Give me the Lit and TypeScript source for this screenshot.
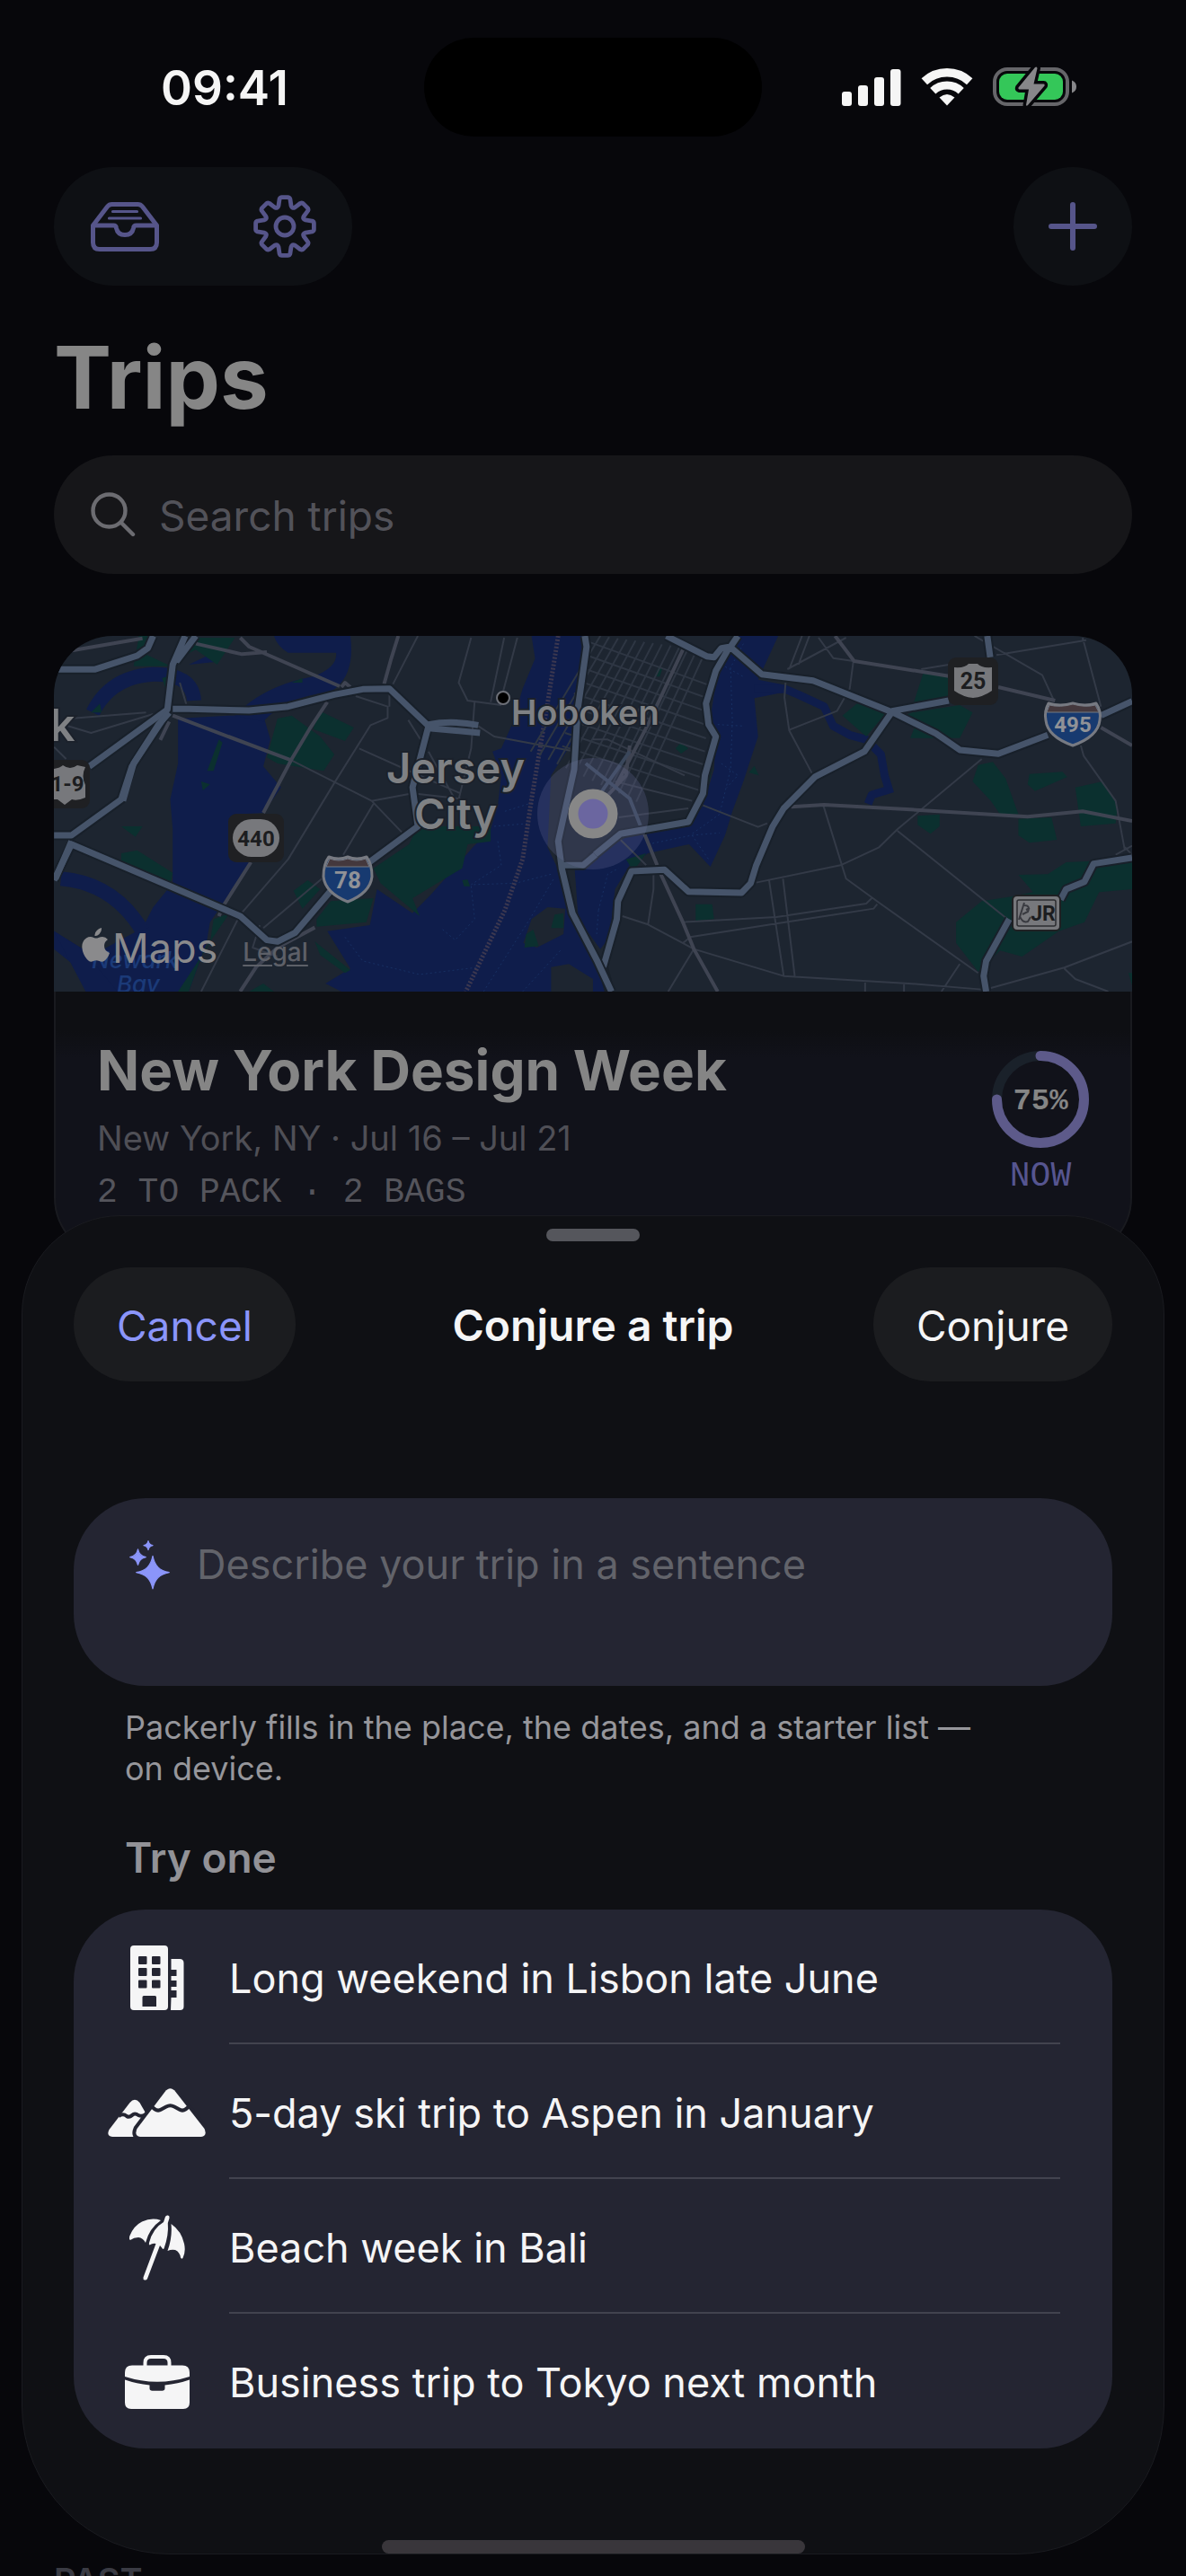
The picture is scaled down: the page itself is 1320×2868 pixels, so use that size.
import { LitElement, html, svg, css } from "lit";
import { customElement, state } from "lit/decorators.js";

/* ---------- icon helpers ---------- */

const star = (cx: number, cy: number, r: number) => {
  const k = r * 0.2;
  return `M${cx} ${cy - r}C${cx + k * 0.6} ${cy - k * 2} ${cx + k * 2} ${cy - k * 0.6} ${cx + r} ${cy}C${cx + k * 2} ${cy + k * 0.6} ${cx + k * 0.6} ${cy + k * 2} ${cx} ${cy + r}C${cx - k * 0.6} ${cy + k * 2} ${cx - k * 2} ${cy + k * 0.6} ${cx - r} ${cy}C${cx - k * 2} ${cy - k * 0.6} ${cx - k * 0.6} ${cy - k * 2} ${cx} ${cy - r}Z`;
};

const gearPath = (() => {
  const at = (r: number, deg: number) => {
    const a = ((deg - 90) * Math.PI) / 180;
    return `${(35 + r * Math.cos(a)).toFixed(2)} ${(35 + r * Math.sin(a)).toFixed(2)}`;
  };
  let d = "";
  for (let i = 0; i < 8; i++) {
    const c = i * 45;
    d += `${i ? "L" : "M"}${at(24, c - 17)}L${at(31, c - 11)}Q${at(33, c - 9)} ${at(32.5, c - 5)}L${at(32.5, c + 5)}Q${at(33, c + 9)} ${at(31, c + 11)}L${at(24, c + 17)}Q${at(21, c + 22.5)} ${at(24, c + 28)}`;
  }
  return d + "Z";
})();

const icons = {
  tray: html`<svg class="icon-tray" viewBox="0 0 76 55" fill="none" stroke="currentColor" stroke-width="5" stroke-linejoin="round" stroke-linecap="round" aria-hidden="true">
    <path d="M2.5 26L18.5 5Q20.5 2.5 23.5 2.5H52.5Q55.5 2.5 57.5 5L73.5 26V45Q73.5 52.5 66 52.5H10Q2.5 52.5 2.5 45Z" />
    <path d="M3 26H25.500Q28 26 28.500 29Q30 36.500 38 36.500Q46 36.500 47.500 29Q48 26 50.500 26H73" />
    <path d="M24.500 10.500H51.500M20.500 18H55.500" stroke-width="3.200" />
  </svg>`,
  gear: html`<svg class="icon-gear" viewBox="0 0 70 70" fill="none" stroke="currentColor" stroke-width="4.800" stroke-linejoin="round" aria-hidden="true">
    <path d=${gearPath} /><circle cx="35" cy="35" r="10" />
  </svg>`,
  plus: html`<svg class="icon-plus" viewBox="0 0 54 54" stroke="currentColor" stroke-width="6" stroke-linecap="round" aria-hidden="true">
    <path d="M27 3V51M3 27H51" />
  </svg>`,
  search: html`<svg class="icon-search" viewBox="0 0 50 50" fill="none" stroke="currentColor" stroke-width="4.400" stroke-linecap="round" aria-hidden="true">
    <circle cx="20.500" cy="20.500" r="18" /><path d="M34 34L47 47" />
  </svg>`,
  sparkles: html`<svg class="icon-spark" viewBox="0 0 45 55" fill="currentColor" stroke="currentColor" stroke-width="1.200" stroke-linejoin="round" aria-hidden="true">
    <path d=${star(26, 35.700, 18.300)} /><path d=${star(9.500, 18.700, 8.800)} /><path d=${star(21, 5.600, 5)} />
  </svg>`,
  building: html`<svg class="icon-building" viewBox="0 0 60 72" fill="currentColor" aria-hidden="true">
    <path fill-rule="evenodd" d="M4 0H38Q42 0 42 4V68Q42 72 38 72H4Q0 72 0 68V4Q0 0 4 0ZM10 12Q9 12 9 13V20Q9 21 10 21H17.500Q18.500 21 18.500 20V13Q18.500 12 17.500 12ZM25 12Q24 12 24 13V20Q24 21 25 21H32.500Q33.500 21 33.500 20V13Q33.500 12 32.500 12ZM10 25Q9 25 9 26V33Q9 34 10 34H17.500Q18.500 34 18.500 33V26Q18.500 25 17.500 25ZM25 25Q24 25 24 26V33Q24 34 25 34H32.500Q33.500 34 33.500 33V26Q33.500 25 32.500 25ZM10 38.500Q9 38.500 9 39.500V46.500Q9 47.500 10 47.500H17.500Q18.500 47.500 18.500 46.500V39.500Q18.500 38.500 17.500 38.500ZM25 38.500Q24 38.500 24 39.500V46.500Q24 47.500 25 47.500H32.500Q33.500 47.500 33.500 46.500V39.500Q33.500 38.500 32.500 38.500ZM15 56Q13.500 56 13.500 57.500V68H29V57.500Q29 56 27.500 56Z" />
    <path d="M45.500 15H55Q59.500 15 59.500 19.500V68Q59.500 72 55.500 72H45L45.500 58H51.500V50H45.500V46H51.500V39H45.500V34H51.500V27H45.500Z" />
  </svg>`,
  mountains: html`<svg class="icon-mountains" viewBox="0 0 110 54" aria-hidden="true">
    <path fill="currentColor" d="M24.500 16Q30 9.500 35.500 16L48 38L34 54H5Q-2 53 1.500 46Z" />
    <path class="cut" d="M12 31Q17 27.500 21 31Q24 33 27 30Q30 27 34 30Q38 32 42 29" />
    <path class="halo" d="M63.500 4Q69.500 -3.500 75.500 4L107.500 45Q111 53 104 54H36Q29 53 32.500 45Z" />
    <path fill="currentColor" d="M63.500 4Q69.500 -3.500 75.500 4L107.500 45Q111 53 104 54H36Q29 53 32.500 45Z" />
    <path class="cut" d="M48 19Q54 27 59.500 23.500L65 20.500Q69.500 18 74 20.500L79.500 23.500Q85 27 91 19" />
  </svg>`,
  umbrella: html`<svg class="icon-umbrella" viewBox="0 0 62 73" fill="currentColor" aria-hidden="true">
    <path d="M1 28Q-1 27 0.500 23Q5 12 14 7.500Q25 2.500 35 6Q22 15 18 31Q15 25.500 10 25Q5 25 1 28Z" />
    <path d="M40 2Q41 0 43 0.500Q45 1 44.500 3.500L42.800 9Q44 22 38.500 37.500Q37 38.500 36.500 37L34 34L20 71Q19 73 17 72.500Q15 72 15.500 69.500L29.500 32Q26 31 22.500 33.500Q21.500 33 22 31Q26 15 38 8Z" />
    <path d="M46.500 10Q58 18 61 32Q63 41 59.500 48Q58 49.500 57 47.500Q56 41 51 39Q47 38 42.500 40Q48 25 46.500 10Z" />
  </svg>`,
  briefcase: html`<svg class="icon-briefcase" viewBox="0 0 72 60" fill="currentColor" aria-hidden="true">
    <path d="M20.500 12V8.500Q20.500 0 29 0H43Q51.500 0 51.500 8.500V12H47.500V8.500Q47.500 4 43 4H29Q24.500 4 24.500 8.500V12Z" />
    <path d="M8 11.500H64Q72 11.500 72 19.500V24Q36 35.500 0 24V19.500Q0 11.500 8 11.500Z" />
    <path d="M0 27.500Q13 32 27.500 33.500V37Q27.500 39.700 30.500 39.700H41.500Q44.500 39.700 44.500 37V33.500Q59 32 72 27.500V53Q72 60 65 60H7Q0 60 0 53Z" />
  </svg>`,
};

/* ---------- status bar ---------- */

@customElement("status-bar")
class StatusBar extends LitElement {
  static styles = css`
    :host {
      display: grid;
      grid-template-columns: 1fr 376px 1fr;
      align-items: center;
      padding-top: 42px;
      color: #f5f5f5;
    }
    .time {
      font-size: 53px;
      font-weight: 600;
      line-height: 64px;
      text-align: center;
      padding: 2px 0 0 28px;
    }
    .island {
      height: 110px;
      border-radius: 55px;
      background: #000;
    }
    .signals {
      display: flex;
      justify-content: center;
      align-items: center;
      gap: 22px;
      padding-right: 32px;
    }
    .bars { width: 66px; height: 42px; }
    .wifi { width: 58px; height: 42px; }
    .battery { width: 94px; height: 46px; }
  `;
  render() {
    return html`
      <time class="time">09:41</time>
      <div class="island"></div>
      <div class="signals">
        <svg class="bars" viewBox="0 0 66 42" fill="currentColor" aria-hidden="true">
          <rect x="0" y="26" width="11" height="16" rx="3" /><rect x="18" y="19" width="11" height="23" rx="3" />
          <rect x="36" y="10" width="11" height="32" rx="3" /><rect x="54" y="1" width="11.500" height="41" rx="3" />
        </svg>
        <svg class="wifi" viewBox="0 0 58 42" fill="none" stroke="currentColor" aria-hidden="true">
          <path d="M3.800 14.700A37 37 0 0 1 54.200 14.700" stroke-width="9.500" />
          <path d="M13.300 25.200A23 23 0 0 1 44.700 25.200" stroke-width="9" />
          <path d="M20.500 32.500Q29 25.500 37.500 32.500L29 41.500Z" fill="currentColor" stroke="none" />
        </svg>
        <svg class="battery" viewBox="0 -1 94 46" aria-hidden="true">
          <rect x="2" y="2" width="81" height="39" rx="14" fill="none" stroke="#66666a" stroke-width="4" />
          <rect x="7" y="7" width="71" height="29" rx="9" fill="#34c759" />
          <path d="M88 14.500Q93 16.500 93 21.500Q93 26.500 88 28.500Z" fill="#87878a" />
          <path d="M47 0L28.500 22.500Q28 24 29.500 24.500H40L37 42Q37.500 43.500 39 42L57.500 20.500Q58 18.500 56.500 18.500H45.500L49.500 1Q49 -1.500 47 0Z" fill="#87878a" stroke="#07070b" stroke-width="7" paint-order="stroke" stroke-linejoin="round" />
        </svg>
      </div>
    `;
  }
}

/* ---------- map ---------- */

/* West half and east half are each digitised on their own grid. */
const west = "translate(-20 -18) scale(0.3954 0.3333)";
const east = "translate(600 -18) scale(0.4082 0.3333)";

const manhattanGrid = (() => {
  let d = "";
  for (let i = 0; i < 13; i++) {
    const x = 20 + i * 24;
    d += `M${x} ${54 + i * 4}L${x - 190} ${440 + i * 14}`;
  }
  for (let i = 0; i < 9; i++) {
    const y = 70 + i * 44;
    d += `M${-20 - i * 8} ${y}L${320 - i * 3} ${y + 150}`;
  }
  return d;
})();

@customElement("trip-map")
class TripMap extends LitElement {
  static styles = css`
    :host { display: block; position: relative; }
    .map { display: block; width: 100%; height: auto; }
    .map path { vector-effect: non-scaling-stroke; fill: none; stroke-linejoin: round; }
    .map .water { fill: #0f1d4b; }
    .map .park { fill: #0b302f; }
    .map .land { fill: #1d2530; }
    .map .creek { stroke: #0f1d4b; stroke-width: 9; }
    .map .river { stroke: #0f1d4b; stroke-width: 16; }
    .map .street { stroke: #2e3643; stroke-width: 2; }
    .map .minor { stroke: #333a47; stroke-width: 2; }
    .map .major { stroke: #3f4452; stroke-width: 4; }
    .map .casing { stroke: #18202a; stroke-width: 11; }
    .map .highway { stroke: #46546a; stroke-width: 7; }
    .map .ferry { stroke: #173063; stroke-width: 1; stroke-dasharray: 2 3; }
    .map .border { stroke: #3c3850; stroke-width: 5; stroke-dasharray: 2 2; }
    .city {
      fill: #7f8184;
      stroke: #1b212b;
      stroke-width: 4;
      paint-order: stroke;
      font-weight: 600;
    }
    .sea { fill: #1b3a78; font-style: italic; font-weight: 500; }
    .num { font-family: "Roboto", "Liberation Sans", sans-serif; font-weight: 700; text-anchor: middle; }
    .dark { fill: #1c1d20; }
    .light { fill: #909297; }
    .credits {
      position: absolute;
      left: 31px;
      bottom: 20px;
      display: flex;
      align-items: center;
      color: #8a8a8c;
    }
    .apple { width: 32px; height: 40px; margin-bottom: 8px; }
    .brand { font-size: 45px; line-height: 56px; margin-left: 2px; }
    .legal {
      font-size: 28px;
      line-height: 30px;
      margin-left: 28px;
      margin-top: 8px;
      color: #5d6068;
      font-weight: 500;
      text-underline-offset: 4px;
    }
  `;
  render() {
    const westRoads = svg`
      <path class="casing" d="M51 166H165L285 120L315 95L330 54M420 54L385 150L370 300L150 490M450 54L395 140M385 298H430L600 303L710 290L840 250L920 232L995 230L1105 355L1060 560L1075 690L830 905L730 1045L680 1075L650 1070L575 990L100 750L51 870M51 720H100L240 600L270 490L370 310" />
      <path class="highway" d="M51 166H165L285 120L315 95L330 54M420 54L385 150L370 300L150 490M450 54L395 140M385 298H430L600 303L710 290L840 250L920 232L995 230L1105 355L1060 560L1075 690L830 905L730 1045L680 1075L650 1070L575 990L100 750L51 870M51 720H100L240 600L270 490L370 310" />
      <path class="highway" d="M245 605L275 480L345 350L375 310M55 865L100 740M1105 350Q1170 335 1245 352M1105 362L1250 378" />`;
    return html`
      <svg class="map" viewBox="0 0 1200 396" role="img" aria-label="Map of New York and Jersey City">
        <rect width="1200" height="396" fill="#1d2530" />
        <g transform=${west}>
          <path class="water" d="M400 330L540 320L640 320L660 400L640 490L690 560L640 645L560 650L545 800L600 810L525 950L490 1010L480 1080L430 1242H200L51 1100V1040L160 1120L300 1030L330 960L385 880V700L378 600L400 480Z" />
          <path class="water" d="M670 54H885Q900 190 830 240Q700 260 640 340L560 320Q640 220 780 190Q850 160 845 110H710Q680 90 670 54ZM430 150L500 110L510 140ZM51 1040L130 1100L230 1242H140Z" />
          <path class="river" d="M70 865Q220 880 300 1040M160 310Q210 190 330 182Q440 180 445 270" />
          <path class="water" d="M1395 54H1540L1535 160L1515 400L1450 520L1440 760L1480 860L1530 1050L1620 1242H860L815 1215L885 1165L820 1040L940 1020L960 900L1060 980L1110 920L1230 760L1280 700L1300 620L1310 520L1285 440L1310 430L1340 350L1370 230L1405 130Z" />
          <path class="park" d="M290 54H330L300 110L380 155H275ZM430 60H560L510 150L450 100L400 130ZM680 330L720 320L800 390L840 450L810 505L680 480L650 460ZM800 305L895 360L870 405L780 365ZM515 400L525 410L500 505H482ZM465 540L490 550L470 570ZM240 780L285 770L385 845L380 875L240 805ZM720 210L750 195V210ZM1075 690H1280V740L1215 750L1200 830L1060 930L1080 990L970 880L950 830L1050 750ZM725 905L765 870L800 900L750 965ZM790 1000L830 940L950 930L930 1010L790 1025ZM500 1000L545 980L470 1110L430 1242L400 1242L490 1080ZM785 1075L885 1170L870 1180L800 1120ZM600 1242L640 1215L670 1242ZM155 310L180 280L185 310ZM355 195L368 190V240ZM240 690L300 690L280 725ZM1200 870L1215 868L1222 890L1205 890Z" />
          <path class="land" d="M1395 1000L1440 960L1490 965L1485 1050L1410 1095L1372 1080ZM1450 1160L1500 1150L1568 1200V1242H1450Z" />
          <path class="park" d="M1380 1050L1400 1035L1415 1090L1375 1095ZM1460 985L1485 980V1030L1450 1030Z" />
          <path class="ferry" d="M1300 740L1310 820L1225 885L1350 880L1450 850M1225 890L1235 1000L1180 1070L1140 1030M870 1060L920 1140L1080 1185L1250 1160M1290 690L1390 680M1320 640L1400 610M1260 1242L1390 1000L1460 860M1370 1242L1480 1100" />
          <path class="border" d="M1470 54L1440 280L1395 600L1370 800L1320 970L1210 1242" />
          <path class="minor" d="M1225 60L1190 210L1215 270L1310 285M1318 60L1280 275M1355 60L1315 240M1235 270L1225 430L1190 600M900 255L990 290V328L942 352L840 545L710 800L575 985L465 1242M910 430L1060 510L1195 580M945 605L1060 580L1195 598M720 470L945 605L1030 710M950 615L865 785M1075 54L1005 215M995 250V290M805 865L640 1030M1048 335L1085 405M1105 440L1175 590M95 330L310 310M90 355L155 378L330 315M51 425L85 465M1245 355L1290 390L1505 437M630 1020L610 1095L680 1125M405 210L425 290" />
          <path class="major" d="M820 275L770 365L720 465L640 645M605 810L525 960L515 990M385 320L715 468M90 105L300 62M450 80L580 115L650 108M575 60L600 90L855 222M1020 54L1000 130L980 215M375 340L350 402M785 1028L680 1095L620 1160L575 1242M860 225L870 210L885 225" />
          ${westRoads}
        </g>
        <g transform=${east}>
          <path class="water" d="M385 54H505L450 200L525 218L530 240L440 262L450 390L410 540L380 640L360 720L320 825L262 750L150 780L100 820L60 900L45 1060L20 1100L-40 1000L-50 830L0 790L100 720L260 690L300 620L330 500L335 390L320 330L340 170Z" />
          <path class="creek" d="M440 232H525L560 250L630 290L655 355L700 385L745 400L785 450L795 520L810 580M800 570L760 585L750 615" />
          <path class="park" d="M900 180L970 190V260L875 275ZM870 310L1000 285L1035 310L1000 395H865L880 350L830 330ZM680 320L720 280L800 310L745 390ZM1035 540L1050 485L1090 475L1125 530L1160 650H1110L1085 605ZM1190 515L1280 508L1293 525L1205 572L1185 550ZM1315 560L1390 540L1430 620L1425 680L1330 690ZM885 655L945 650V690L920 715L885 685ZM1160 665L1250 660L1265 735L1190 745L1160 720ZM1160 852L1240 850L1290 810L1470 800V900L1380 910L1340 1010L1270 1040L1170 1125L1110 1105L1080 1140L1050 1175L990 1080V1010L1060 940L1140 925L1200 910ZM225 430L240 410L260 430L240 447ZM168 190L178 160H190L182 190ZM425 510L440 488L452 520ZM280 950H325L330 1000L280 1005ZM90 800L145 780L110 840ZM300 600L330 470L335 440L310 580ZM1460 1180H1470V1222Z" />
          <path class="street" d=${manhattanGrid} />
          <path class="ferry" d="M410 80L375 160L380 340L375 500L345 650L270 715M350 150L410 190M340 350L410 355M350 480L395 520L365 560M270 720L345 712M270 720L315 800M150 750L270 720M15 970L40 850L70 830M15 970L10 1050" />
          <path class="minor" d="M570 54L535 165M590 54L560 150M690 60L530 165M615 60L655 128L710 138L700 230L665 305L535 368M525 210L522 260L535 370L598 515M895 165L970 150M1100 118L1345 68M1040 54L1225 185L1255 265M1335 60L1385 290M1330 420L1338 455L1425 605L1450 770M1060 465L830 700L780 760L675 820L445 878M830 705L1130 1000M628 620L690 865L780 945L1050 1180M480 870L520 1190M518 865L550 1190M245 1010L500 993L745 948L760 930M265 1060L500 1015L765 965L775 950M80 990L150 1018L275 1100L520 1190L860 1215L1060 1235M165 850V900L150 1018M275 1100L205 1242M245 1080L265 1060M742 1212V1242M848 1218V1242M950 1242L1000 1150M1085 1230L1285 1162L1470 1075M1285 1165L1315 1200L1405 1242M1425 785L1470 755M1450 760L1470 785M300 620L450 692L475 680M70 660L260 630M75 735L145 820M60 540L270 605M0 400H40L250 520" />
          <path class="major" d="M660 54L712 138L970 188M1105 225L1260 270M1385 360L1470 420M540 625L630 618L880 635L1185 658L1335 640L1470 672M245 100L150 350L60 560M140 715L175 820M185 850L245 1010L275 1100L340 1242M100 420L90 520L30 600" />
          <path class="highway" style="stroke-width:4;stroke:#3a475b" d="M-20 480L100 597L130 690M100 440L20 580" />
          <path class="casing" d="M200 54L310 122L330 125L350 95L375 90L395 54M370 95L335 170L308 280L315 350L335 390L305 520L300 580L260 675L75 715L-5 795M375 92L460 182L600 203L815 308L740 440L605 525L520 630L490 690L445 820L430 880L405 912L260 908L195 835L105 840L68 940L65 1000L28 1160L45 1242M815 308L935 380L1000 435L1105 448L1240 385M815 305L970 270M1075 54L1083 125M1385 320L1470 272M1470 795L1365 815L1340 875L1290 900L1275 935M1135 1000L1072 1140L1065 1190L1072 1242" />
          <path class="highway" d="M200 54L310 122L330 125L350 95L375 90L395 54M370 95L335 170L308 280L315 350L335 390L305 520L300 580L260 675L75 715L-5 795M375 92L460 182L600 203L815 308L740 440L605 525L520 630L490 690L445 820L430 880L405 912L260 908L195 835L105 840L68 940L65 1000L28 1160M815 308L935 380L1000 435L1105 448L1240 385M815 305L970 270M1075 54L1083 125M1385 320L1470 272M1470 795L1365 815L1340 875L1290 900L1275 935M1135 1000L1072 1140L1065 1190L1072 1242" />
        </g>
        <g transform=${west}>
          <path class="casing" d="M1545 54L1550 90L1525 300L1515 500L1470 740L1480 830L1510 980L1580 1140L1620 1242M1475 820L1540 820L1575 785" />
          <path class="highway" d="M1545 54L1550 90L1525 300L1515 500L1470 740L1480 830L1510 980L1580 1140L1620 1242M1475 820L1540 820L1575 785" />
        </g>

        <text class="city" font-size="50" x="-5" y="117">k</text>
        <circle cx="500" cy="69" r="7" fill="#000" stroke="#6d7078" stroke-width="2" />
        <text class="city" font-size="38" x="509" y="99">Hoboken</text>
        <text class="city" font-size="47" x="370" y="164">Jersey</text>
        <text class="city" font-size="47" x="401" y="215">City</text>
        <text class="sea" font-size="26" x="42" y="370">Newark</text>
        <text class="sea" font-size="26" x="70" y="397">Bay</text>

        <rect x="-20" y="138" width="60" height="54" rx="9" fill="#1f2023" />
        <path d="M-20 148Q4 150 10 144Q18 150 26 144L35 146Q30 156 35 166V180Q26 184 20 182L12 188L4 182H-20Z" style="fill:#77787c" />
        <text class="num dark" font-size="24" x="15" y="173">1-9</text>

        <rect x="194" y="198" width="62" height="54" rx="9" fill="#1f2023" />
        <rect x="199" y="204" width="52" height="42" rx="21" fill="#77787c" />
        <text class="num dark" font-size="24" x="225" y="234">440</text>

        <path d="M306 246Q317 250 327 246Q337 250 348 246Q354 254 354 268Q352 286 327 296Q302 286 300 268Q300 254 306 246Z" style="fill:#173a70;stroke:#777a82;stroke-width:3" />
        <path d="M307 248Q317 252 327 248Q337 252 347 248L351 257H303Z" style="fill:#44383d;stroke:#777a82;stroke-width:1" />
        <text class="num light" font-size="26" x="327" y="281">78</text>

        <rect x="995" y="24" width="56" height="53" rx="9" fill="#1f2023" />
        <path d="M1002 35Q1014 36 1018 31H1028Q1032 36 1044 35V61Q1034 68 1023 69Q1012 68 1002 61Z" style="fill:#77787c" />
        <text class="num dark" font-size="25" x="1023" y="59">25</text>

        <path d="M1107 75Q1120 79 1134 75Q1148 79 1160 75Q1166 84 1164 94Q1162 112 1134 122Q1106 112 1104 94Q1102 84 1107 75Z" style="fill:#173a70;stroke:#777a82;stroke-width:3" />
        <path d="M1108 77Q1120 80 1134 76Q1148 80 1159 77L1163 85H1105Z" style="fill:#44383d;stroke:#777a82;stroke-width:1" />
        <text class="num light" font-size="24" x="1134" y="107">495</text>

        <rect x="1067" y="289" width="53" height="39" rx="5" fill="#77787c" stroke="#1f2023" stroke-width="2" />
        <rect x="1072" y="294" width="43" height="29" rx="2" fill="none" stroke="#2c2d31" stroke-width="1.500" />
        <path d="M1074 316L1080 297M1080 300Q1087 300 1084 307L1078 310M1075 312Q1078 320 1084 318L1087 313M1082 305L1086 303" style="stroke:#393a40;stroke-width:2" />
        <text class="num dark" font-size="23" x="1101" y="317">JR</text>

        <circle cx="600" cy="198" r="62" fill="#6a6e9a" opacity="0.250" />
        <circle cx="600" cy="198" r="22" fill="#6b66a0" stroke="#878787" stroke-width="11" />
      </svg>
      <div class="credits">
        <svg class="apple" viewBox="0 0 32 38" fill="currentColor" aria-hidden="true">
          <path d="M22 0Q22.500 4 19.500 7Q17 9.500 14.500 9Q14 5.500 16.800 3Q19 0.500 22 0ZM29 13Q25 15.500 25 20Q25 25.500 31 28Q29 34 25 37Q22.500 38.500 19.500 37Q16 35.500 13 37Q10 38.500 8 37Q3 33 1 26Q-1.500 16 5 11.500Q9 9 13.500 11Q16 12 18.500 11Q25 8 29 13Z" />
        </svg>
        <span class="brand">Maps</span>
        <a class="legal" href="#legal">Legal</a>
      </div>
    `;
  }
}

/* ---------- conjure sheet ---------- */

interface Idea {
  icon: "building" | "mountains" | "umbrella" | "briefcase";
  text: string;
}

const ideas: Idea[] = [
  { icon: "building", text: "Long weekend in Lisbon late June" },
  { icon: "mountains", text: "5-day ski trip to Aspen in January" },
  { icon: "umbrella", text: "Beach week in Bali" },
  { icon: "briefcase", text: "Business trip to Tokyo next month" },
];

@customElement("conjure-sheet")
class ConjureSheet extends LitElement {
  static styles = css`
    :host {
      display: flex;
      flex-direction: column;
      box-sizing: border-box;
      padding: 14px 57px 0;
      border: 1px solid #1a1b20;
      border-radius: 110px 110px 165px 165px;
      background: #0f1014;
      overflow: hidden;
    }
    button { font: inherit; border: 0; cursor: pointer; }
    .grabber {
      align-self: center;
      width: 104px;
      height: 14px;
      border-radius: 7px;
      background: #55565c;
    }
    .bar {
      display: grid;
      grid-template-columns: 1fr auto 1fr;
      align-items: center;
      margin-top: 29px;
    }
    .title { margin: 0; padding-top: 2px; font-size: 48px; font-weight: 600; line-height: 60px; color: #f5f5f6; }
    .action {
      justify-self: start;
      height: 127px;
      padding: 2px 48px 0;
      border-radius: 64px;
      background: #1b1c1f;
      font-size: 46px;
      line-height: 60px;
    }
    .cancel { color: #8b95fa; }
    .confirm { justify-self: end; color: #f5f5f6; }
    .field {
      display: flex;
      gap: 30px;
      height: 209px;
      box-sizing: border-box;
      margin-top: 130px;
      padding: 44px 57px 0 62px;
      border-radius: 80px;
      background: #242532;
    }
    .icon-spark { flex: none; width: 45px; height: 55px; margin-top: 3px; color: #8b95fa; }
    .prompt {
      flex: 1;
      height: 120px;
      padding: 0;
      border: 0;
      outline: 0;
      resize: none;
      background: none;
      color: #f5f5f6;
      font: inherit;
      font-size: 45px;
      line-height: 60px;
    }
    .prompt::placeholder { color: #62636a; opacity: 1; }
    .hint {
      margin: 23px 57px 0;
      font-size: 36px;
      line-height: 46px;
      color: #96969b;
    }
    .heading { margin: 46px 57px 0; font-size: 46px; font-weight: 600; line-height: 60px; color: #929297; }
    .ideas {
      list-style: none;
      margin: 28px 0 0;
      padding: 0;
      border-radius: 80px;
      background: #242532;
      overflow: hidden;
    }
    .idea {
      display: grid;
      grid-template-columns: 173px 1fr;
      align-items: center;
      width: 100%;
      height: 150px;
      padding: 0 58px 0 0;
      background: none;
      color: #f5f5f6;
      font-size: 45px;
      text-align: left;
    }
    .glyph { display: flex; justify-content: center; padding: 2px 0 0 12px; }
    .glyph svg { flex: none; }
    .label {
      display: flex;
      align-items: center;
      height: 150px;
      box-sizing: border-box;
      padding-top: 4px;
      border-bottom: 2px solid #42434f;
    }
    .ideas li:last-child .label { border-color: transparent; }
    .icon-building { width: 60px; height: 72px; }
    .icon-mountains { width: 110px; height: 54px; }
    .icon-umbrella { width: 62px; height: 73px; }
    .icon-briefcase { width: 72px; height: 60px; }
    .cut { fill: none; stroke: #242532; stroke-width: 4; }
    .halo { fill: none; stroke: #242532; stroke-width: 8; }
    .home {
      align-self: center;
      width: 471px;
      height: 15px;
      margin-top: 102px;
      border-radius: 8px;
      background: #39363b;
    }
  `;

  @state() private prompt = "";

  render() {
    return html`
      <div class="grabber"></div>
      <header class="bar">
        <button class="action cancel" type="button">Cancel</button>
        <h2 class="title">Conjure a trip</h2>
        <button class="action confirm" type="button">Conjure</button>
      </header>
      <label class="field">
        ${icons.sparkles}
        <textarea
          class="prompt"
          aria-label="Describe your trip in a sentence"
          placeholder="Describe your trip in a sentence"
          .value=${this.prompt}
          @input=${(e: Event) => (this.prompt = (e.target as HTMLTextAreaElement).value)}
        ></textarea>
      </label>
      <p class="hint">Packerly fills in the place, the dates, and a starter list — on&nbsp;device.</p>
      <h3 class="heading">Try one</h3>
      <ul class="ideas">
        ${ideas.map(
          (idea) => html`<li>
            <button class="idea" type="button" @click=${() => (this.prompt = idea.text)}>
              <span class="glyph">${icons[idea.icon]}</span>
              <span class="label">${idea.text}</span>
            </button>
          </li>`
        )}
      </ul>
      <div class="home"></div>
    `;
  }
}

/* ---------- app ---------- */

@customElement("app-root")
class AppRoot extends LitElement {
  static styles = css`
    :host {
      display: grid;
      height: 100vh;
      overflow: hidden;
      background: #07070b;
      font-family: "Inter", "Liberation Sans", sans-serif;
    }
    .page, .sheet { grid-area: 1 / 1; min-width: 0; }
    .page { display: flex; flex-direction: column; min-height: 0; }
    .sheet { align-self: end; margin: 0 24px 24px; }
    .content { flex: 1; display: flex; flex-direction: column; padding: 34px 60px 0; }
    button { font: inherit; border: 0; padding: 0; cursor: pointer; color: #56558a; background: none; }
    .toolbar { display: flex; justify-content: space-between; }
    .group {
      display: flex;
      gap: 48px;
      padding: 0 10px 0 14px;
      border-radius: 66px;
      background: #0e1014;
    }
    .tool { display: grid; place-items: center; width: 130px; height: 132px; }
    .tool svg { display: block; }
    .add { width: 132px; border-radius: 66px; background: #0e1014; }
    .icon-tray { width: 76px; height: 55px; }
    .icon-gear { width: 70px; height: 70px; }
    .icon-plus { width: 54px; height: 54px; }
    .icon-search { width: 50px; height: 50px; color: #6c6c71; flex: none; }
    .heading { margin: 42px 0 0; font-size: 96px; font-weight: 700; line-height: 120px; color: #868686; }
    .search {
      display: flex;
      align-items: center;
      gap: 26px;
      height: 132px;
      margin-top: 27px;
      padding: 0 41px;
      border-radius: 66px;
      background: #161619;
      box-sizing: border-box;
    }
    .query {
      flex: 1;
      min-width: 0;
      padding: 2px 0 0;
      border: 0;
      outline: 0;
      background: none;
      color: #868686;
      font: inherit;
      font-size: 46px;
      line-height: 60px;
    }
    .query::placeholder { color: #525259; opacity: 1; }
    .card {
      margin-top: 69px;
      border-radius: 66px;
      background: linear-gradient(#0e0f13 440px, #11121a 470px);
      overflow: hidden;
    }
    .details {
      display: flex;
      justify-content: space-between;
      padding: 50px 46px 50px;
      border: 2px solid #191a1f;
      border-top: 0;
      border-radius: 0 0 66px 66px;
    }
    .name { margin: 0; font-size: 62px; font-weight: 700; line-height: 76px; color: #858585; }
    .where { margin: 12px 0 0; font-size: 38px; line-height: 50px; color: #4f4f56; }
    .mono {
      margin: 16px 0 0;
      font-family: "Liberation Mono", monospace;
      font-size: 38px;
      line-height: 40px;
      color: #55555c;
    }
    .progress { display: flex; flex-direction: column; align-items: center; padding-top: 16px; }
    .ring { width: 108px; height: 108px; }
    .percent { fill: #858585; font-size: 34px; font-weight: 700; font-family: "Liberation Mono", monospace; }
    .now { margin-top: 12px; color: #565590; }
    .past { margin: auto 0 -25px; font-size: 38px; font-weight: 600; line-height: 40px; color: #3a3b44; }
  `;
  render() {
    return html`
      <main class="page">
        <status-bar></status-bar>
        <div class="content">
          <nav class="toolbar">
            <div class="group">
              <button class="tool" type="button" aria-label="Archive">${icons.tray}</button>
              <button class="tool" type="button" aria-label="Settings">${icons.gear}</button>
            </div>
            <button class="tool add" type="button" aria-label="Add trip">${icons.plus}</button>
          </nav>
          <h1 class="heading">Trips</h1>
          <label class="search">
            ${icons.search}
            <input class="query" type="text" aria-label="Search trips" placeholder="Search trips" />
          </label>
          <article class="card">
            <trip-map></trip-map>
            <div class="details">
              <div>
                <h2 class="name">New York Design Week</h2>
                <p class="where">New York, NY · Jul 16 – Jul 21</p>
                <p class="mono">2 TO PACK · 2 BAGS</p>
              </div>
              <div class="progress">
                <svg class="ring" viewBox="0 0 108 108" role="img" aria-label="75% packed">
                  <circle cx="54" cy="54" r="48.500" fill="none" stroke="#1a212a" stroke-width="11" />
                  <path d="M54 5.500A48.500 48.500 0 1 1 5.500 54" fill="none" stroke="#5d5a8a" stroke-width="11" stroke-linecap="round" />
                  <text class="percent" x="54" y="65" text-anchor="middle">75%</text>
                </svg>
                <p class="mono now">NOW</p>
              </div>
            </div>
          </article>
          <h2 class="past">PAST</h2>
        </div>
      </main>
      <conjure-sheet class="sheet" role="dialog" aria-label="Conjure a trip"></conjure-sheet>
    `;
  }
}
